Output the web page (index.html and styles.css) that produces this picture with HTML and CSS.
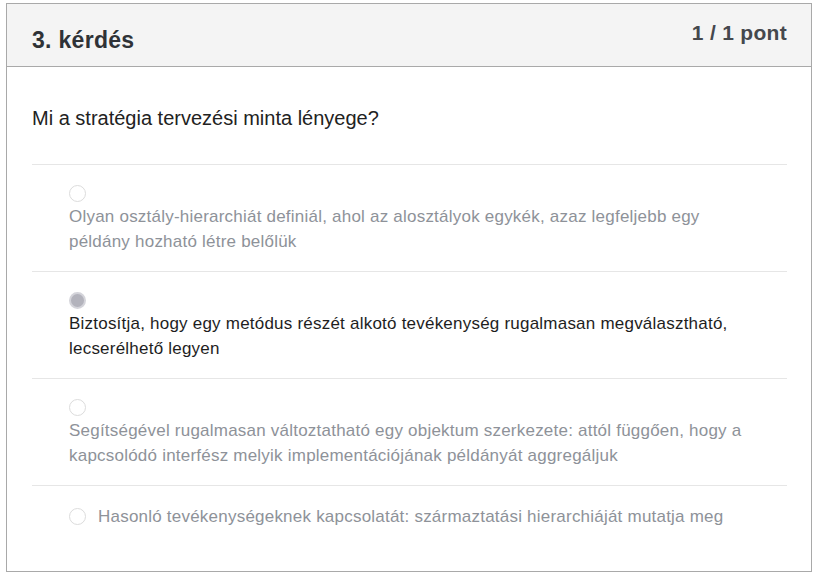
FILE: index.html
```html
<!DOCTYPE html>
<html lang="hu">
<head>
<meta charset="utf-8">
<link rel="stylesheet" href="styles.css">
</head>
<body>
<div class="card">
  <div class="card-head">
    <h2 class="title">3. kérdés</h2>
    <div class="points">1 / 1 pont</div>
  </div>
  <div class="card-body">
    <p class="question">Mi a stratégia tervezési minta lényege?</p>
    <ul class="options">
      <li class="option">
        <span class="radio"></span>
        <span class="label">Olyan osztály-hierarchiát definiál, ahol az alosztályok egykék, azaz legfeljebb egy példány hozható létre belőlük</span>
      </li>
      <li class="option selected">
        <span class="radio"></span>
        <span class="label">Biztosítja, hogy egy metódus részét alkotó tevékenység rugalmasan megválasztható, lecserélhető legyen</span>
      </li>
      <li class="option">
        <span class="radio"></span>
        <span class="label">Segítségével rugalmasan változtatható egy objektum szerkezete: attól függően, hogy a kapcsolódó interfész melyik implementációjának példányát aggregáljuk</span>
      </li>
      <li class="option inline">
        <span class="radio"></span>
        <span class="label">Hasonló tevékenységeknek kapcsolatát: származtatási hierarchiáját mutatja meg</span>
      </li>
    </ul>
  </div>
</div>
</body>
</html>
```
FILE: styles.css
```css
* { box-sizing: border-box; }
html, body { margin: 0; padding: 0; background: #fff; }
body {
  font-family: "Liberation Sans", Arial, sans-serif;
  color: #222;
}
.card {
  margin: 3px 0 0 6px;
  width: 806px;
  height: 569px;
  border: 1px solid #a9a9a9;
  background: #fff;
}
.card-head {
  height: 63px;
  background: #f4f4f4;
  border-bottom: 1px solid #a9a9a9;
  display: flex;
  justify-content: space-between;
  align-items: flex-start;
  padding: 0 24px 0 25px;
}
.title {
  margin: 0;
  padding-top: 22px;
  font-size: 23px;
  line-height: 28px;
  font-weight: bold;
  letter-spacing: 0.3px;
  color: #2f3237;
}
.points {
  padding-top: 16px;
  font-size: 21px;
  line-height: 26px;
  font-weight: bold;
  letter-spacing: 0.3px;
  color: #45484d;
}
.card-body {
  padding: 0 24px 0 25px;
}
.question {
  margin: 0;
  padding: 38px 0 33px;
  font-size: 20px;
  line-height: 26px;
  color: #222;
  border-bottom: 1px solid #e6e6e6;
}
.options {
  list-style: none;
  margin: 0;
  padding: 0;
}
.option {
  display: flex;
  flex-direction: column;
  align-items: flex-start;
  padding: 20px 40px 17px 37px;
  height: 107px;
  border-bottom: 1px solid #e6e6e6;
  font-size: 17px;
  line-height: 25px;
  letter-spacing: 0.22px;
  color: #8e9299;
}
.option .radio {
  flex: none;
  width: 17px;
  height: 17px;
  border-radius: 50%;
  border: 1px solid #dcdcdc;
  background: #fff;
  margin-bottom: 2px;
}
.option.selected { color: #1e1e1e; }
.option.selected .radio {
  border: 2px solid #d4d4da;
  background: #b3b3bc;
}
.option.inline {
  flex-direction: row;
  align-items: center;
  gap: 12px;
  border-bottom: none;
  height: auto;
  padding-top: 18px;
}
.option.inline .radio { margin: 0; }
```
